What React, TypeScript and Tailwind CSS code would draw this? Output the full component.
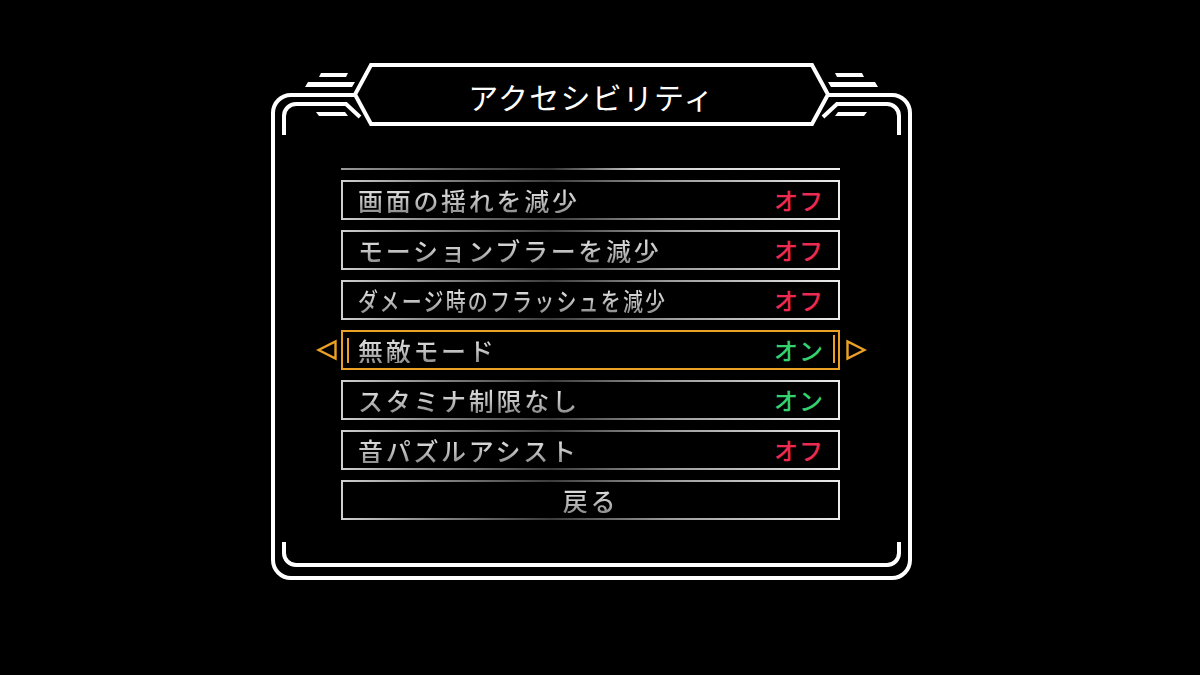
import React from 'react';

type Row = { label: string; value: string; on: boolean; squeeze?: boolean; selected?: boolean };

const rows: Row[] = [
  { label: '画面の揺れを減少', value: 'オフ', on: false },
  { label: 'モーションブラーを減少', value: 'オフ', on: false },
  { label: 'ダメージ時のフラッシュを減少', value: 'オフ', on: false, squeeze: true },
  { label: '無敵モード', value: 'オン', on: true, selected: true },
  { label: 'スタミナ制限なし', value: 'オン', on: true },
  { label: '音パズルアシスト', value: 'オフ', on: false },
];

const font = { fontFamily: '"Noto Sans CJK JP", "Noto Sans", sans-serif' };

function FrameHalf() {
  return (
    <g fill="none" stroke="#ffffff" strokeWidth={4}>
      {/* outer frame (left half) */}
      <path d="M86 35 L21 35 A18 18 0 0 0 3 53 L3 500 A18 18 0 0 0 21 518 L322 518" />
      {/* banner left half */}
      <path d="M322 5 L101 5 L85 34.5 L101 64 L322 64" />
      {/* inner top-left bracket */}
      <path d="M14 75 L14 56 A12 12 0 0 1 26 44 L76 44 L90 57" />
      {/* inner bottom-left bracket */}
      <path d="M14 482 L14 493 A12 12 0 0 0 26 505 L322 505" />
      {/* decorative bars */}
      <polygon points="51,13 78,13 76,17 49,17" fill="#ffffff" stroke="none" />
      <polygon points="38,22 85,22 82,27 35,27" fill="#ffffff" stroke="none" />
      <polygon points="46,52 75,52 78,56 49,56" fill="#ffffff" stroke="none" />
    </g>
  );
}

function Arrow({ dir }: { dir: 'left' | 'right' }) {
  return (
    <svg width="22" height="22" viewBox="0 0 22 22" className="block">
      {dir === 'left' ? (
        <polygon points="2.5,11 19.5,2.5 19.5,19.5" fill="none" stroke="#eaa126" strokeWidth={2.4} strokeLinejoin="miter" />
      ) : (
        <polygon points="19.5,11 2.5,2.5 2.5,19.5" fill="none" stroke="#eaa126" strokeWidth={2.4} strokeLinejoin="miter" />
      )}
    </svg>
  );
}

const labelCls =
  'text-[25px] font-medium leading-none tracking-[2.7px] whitespace-nowrap bg-gradient-to-b from-[#e2e2e2] via-[#c4c4c4] to-[#8e8e8e] bg-clip-text text-transparent';

function OptionRow({ row }: { row: Row }) {
  const border = row.selected
    ? 'bg-[#eaa126]'
    : 'bg-[linear-gradient(90deg,#d0d0d0_0%,#8a8a8a_18%,#3c3c3c_42%,#9c9c9c_66%,#ececec_100%)]';
  return (
    <div className={`relative h-[40px] p-[2px] ${border}`}>
      <div className="relative h-full bg-black flex items-center justify-between pl-[15px] pr-[14px]">
        <span className={`${labelCls} ${row.squeeze ? 'inline-block origin-left scale-x-[0.8]' : ''}`}>
          {row.label}
        </span>
        <span
          className={`text-[24px] font-medium leading-none tracking-[1px] ${row.on ? 'text-[#36d16f]' : 'text-[#ee2a50]'}`}
        >
          {row.value}
        </span>
        {row.selected && (
          <>
            <div className="absolute left-[4px] top-[6px] w-[2px] h-[25px] bg-[#eaa126]" />
            <div className="absolute right-[3px] top-[3px] w-[2px] h-[28px] bg-[#eaa126]" />
          </>
        )}
      </div>
      {row.selected && (
        <>
          <div className="absolute left-[-25px] top-[9px]">
            <Arrow dir="left" />
          </div>
          <div className="absolute right-[-27px] top-[9px]">
            <Arrow dir="right" />
          </div>
        </>
      )}
    </div>
  );
}

export default function App() {
  return (
    <div className="w-[1200px] h-[675px] bg-black overflow-hidden pl-[270px] pt-[60px]" style={font}>
      <div className="relative w-[644px] h-[522px]">
        <svg
          className="absolute inset-0"
          width="644"
          height="522"
          viewBox="0 0 644 522"
        >
          <FrameHalf />
          <g transform="translate(643 0) scale(-1 1)">
            <FrameHalf />
          </g>
        </svg>

        <div className="relative flex flex-col">
          {/* title */}
          <div className="ml-[101px] w-[441px] h-[72px] flex items-center justify-center">
            <span className="text-[30px] leading-none tracking-[1.2px] text-white">アクセシビリティ</span>
          </div>

          <div className="ml-[71px] w-[499px] mt-[36px] flex flex-col">
            <div className="h-[2px] bg-[linear-gradient(90deg,#9a9a9a_0%,#555_25%,#333_42%,#cfcfcf_60%,#eeeeee_100%)]" />
            <div className="mt-[10px] flex flex-col gap-[10px]">
              {rows.map((r) => (
                <OptionRow key={r.label} row={r} />
              ))}
              <div className="h-[40px] p-[2px] bg-[linear-gradient(90deg,#d0d0d0_0%,#8a8a8a_18%,#3c3c3c_42%,#9c9c9c_66%,#ececec_100%)]">
                <div className="h-full bg-black flex items-center justify-center">
                  <span className={labelCls}>戻る</span>
                </div>
              </div>
            </div>
          </div>
        </div>
      </div>
    </div>
  );
}
